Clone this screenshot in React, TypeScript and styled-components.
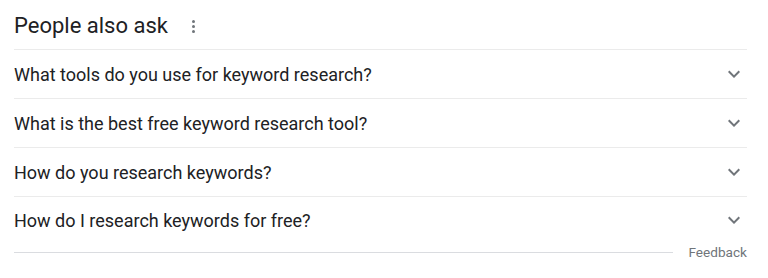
import React from "react";
import styled, { createGlobalStyle } from "styled-components";

const GlobalStyle = createGlobalStyle`
  body {
    margin: 0;
    background: #ffffff;
    font-family: Roboto, "Liberation Sans", Arial, sans-serif;
  }
`;

const Panel = styled.div`
  width: 733px;
  margin-left: 14px;
`;

const Header = styled.div`
  display: flex;
  align-items: center;
  height: 50px;
  border-bottom: 1px solid #ebebeb;
  box-sizing: border-box;
`;

const Title = styled.h2`
  margin: 0;
  font-size: 22px;
  font-weight: 400;
  color: #202124;
  line-height: 28px;
  padding-top: 3px;
`;

const MoreButton = styled.div`
  display: flex;
  flex-direction: column;
  gap: 2px;
  margin-left: 24px;
  padding-top: 3px;
`;

const Dot = styled.span`
  width: 3px;
  height: 3px;
  border-radius: 50%;
  background: #70757a;
`;

const Question = styled.div<{ $last?: boolean }>`
  display: flex;
  align-items: center;
  justify-content: space-between;
  height: ${({ $last }) => ($last ? "46px" : "49px")};
  border-bottom: ${({ $last }) => ($last ? "none" : "1px solid #ebebeb")};
  box-sizing: border-box;
  font-size: 18px;
  color: #202124;
  cursor: pointer;
`;

const Chevron = styled.svg`
  width: 24px;
  height: 24px;
  margin-right: 1px;
  fill: #70757a;
`;

const Footer = styled.div`
  display: flex;
  align-items: center;
`;

const Rule = styled.div`
  flex: 1;
  height: 1px;
  background: #dadce0;
`;

const FeedbackLink = styled.span`
  font-size: 13.6px;
  color: #70757a;
  margin-left: 16px;
  line-height: 18px;
`;

const questions = [
  "What tools do you use for keyword research?",
  "What is the best free keyword research tool?",
  "How do you research keywords?",
  "How do I research keywords for free?",
];

const ChevronIcon = () => (
  <Chevron viewBox="0 0 24 24">
    <path d="M16.59 8.59 12 13.17 7.41 8.59 6 10l6 6 6-6z" />
  </Chevron>
);

export default function App() {
  return (
    <>
      <GlobalStyle />
      <Panel>
        <Header>
          <Title>People also ask</Title>
          <MoreButton>
            <Dot />
            <Dot />
            <Dot />
          </MoreButton>
        </Header>
        {questions.map((q, i) => (
          <Question key={q} $last={i === questions.length - 1}>
            <span>{q}</span>
            <ChevronIcon />
          </Question>
        ))}
        <Footer>
          <Rule />
          <FeedbackLink>Feedback</FeedbackLink>
        </Footer>
      </Panel>
    </>
  );
}
